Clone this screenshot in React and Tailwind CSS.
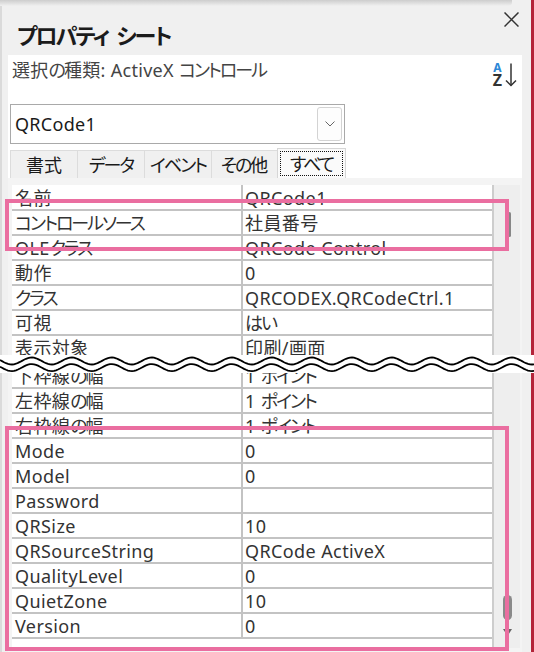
import React from 'react';

const topRows = [
  ['名前', 'QRCode1'],
  ['コントロールソース', '社員番号'],
  ['OLEクラス', 'QRCode Control'],
  ['動作', '0'],
  ['クラス', 'QRCODEX.QRCodeCtrl.1'],
  ['可視', 'はい'],
  ['表示対象', '印刷/画面'],
];

const bottomRows = [
  ['下枠線の幅', '1 ポイント'],
  ['左枠線の幅', '1 ポイント'],
  ['右枠線の幅', '1 ポイント'],
  ['Mode', '0'],
  ['Model', '0'],
  ['Password', ''],
  ['QRSize', '10'],
  ['QRSourceString', 'QRCode ActiveX'],
  ['QualityLevel', '0'],
  ['QuietZone', '10'],
  ['Version', '0'],
];

const tabs = [
  { label: '書式', w: 'w-[67px]' },
  { label: 'データ', w: 'w-[67px]' },
  { label: 'イベント', w: 'w-[67px]' },
  { label: 'その他', w: 'w-[66px]' },
];

// かなは詰めて、英字は少し広げる（Meiryo UI の幅に寄せる）
function J({ text, latin = '' }) {
  const parts = text.split(/([\u3040-\u30ff]+)/);
  return parts.map((p, i) => {
    if (!p) return null;
    if (/[\u3040-\u30ff]/.test(p)) {
      return (
        <span key={i} className="tracking-[-2px]">
          {p}
        </span>
      );
    }
    return (
      <span key={i} className={latin}>
        {p}
      </span>
    );
  });
}

// 波線（省略記号）のパスを作る
function wavePath(cy) {
  let d = '';
  for (let x = 0; x <= 534; x += 2) {
    const y = cy - 3.5 * Math.cos((2 * Math.PI * (x - 31.7)) / 40);
    d += (x === 0 ? 'M' : 'L') + x + ' ' + y.toFixed(2) + ' ';
  }
  return d;
}

function Row({ name, value, first, extra = '' }) {
  return (
    <div className={`flex border-b-2 border-[#c3c3c3] ${first ? 'h-[26px]' : 'h-[25px]'} ${extra}`}>
      <div className="w-[231px] shrink-0 border-r-2 border-[#c3c3c3] pl-[3px] flex items-center whitespace-nowrap overflow-hidden">
        <span className={first ? 'mt-[3px]' : 'mt-[1px]'}>
          <J text={name} latin="tracking-[0.4px]" />
        </span>
      </div>
      <div className="flex-1 pl-[2px] flex items-center whitespace-nowrap overflow-hidden">
        <span className={first ? 'mt-[3px]' : 'mt-[1px]'}>
          <J text={value} latin="tracking-[0.4px]" />
        </span>
      </div>
    </div>
  );
}

function SortIcon() {
  return (
    <div className="flex items-start gap-[2px]">
      <div className="flex flex-col items-center w-[11px]">
        <span className="text-[12px] leading-[10px] font-bold text-[#2b87d6]">A</span>
        <span className="text-[16px] leading-[14px] font-bold text-[#333]">Z</span>
      </div>
      <svg width="12" height="24" viewBox="0 0 12 24" fill="none" stroke="#333" strokeWidth="1.5">
        <path d="M6 0.5 V22.5" />
        <path d="M1 17.5 L6 22.5 L11 17.5" />
      </svg>
    </div>
  );
}

export default function App() {
  return (
    <div className="relative w-[534px] h-[652px] overflow-hidden bg-[#f0f0f0] flex font-['Noto_Sans','Noto_Sans_CJK_JP',sans-serif] [font-feature-settings:'palt']">
      {/* 上端の影 */}
      <div className="absolute top-0 left-0 w-[512px] h-[6px] rounded-br-[4px] bg-linear-to-b from-[#cdcdcd] to-[#f0f0f0]" />

      <div className="w-[531px] h-full border-l-2 border-[#dadada] flex flex-col">
        <div className="h-[55px] flex justify-between items-start">
          <div className="pl-[15px] pt-[19px] text-[22px] leading-[32px] font-bold text-[#1b1b1b] whitespace-nowrap">
            <J text="プロパティ" />
            <span className="inline-block w-[8px]" />
            <J text="シート" />
          </div>
          <svg className="mt-[12px] mr-[12px]" width="15" height="15" viewBox="0 0 15 15" stroke="#333" strokeWidth="1.5">
            <path d="M0.5 0.5 L14.5 14.5 M14.5 0.5 L0.5 14.5" />
          </svg>
        </div>

        <div className="ml-[6px] mr-[9px] bg-white">
          <div className="h-[49px] flex justify-between items-start">
            <div className="pl-[4px] pt-[3px] text-[18px] leading-[24px] text-[#444]">
              <J text="選択の種類: ActiveX コントロール" latin="tracking-[0.3px]" />
            </div>
            <div className="mt-[8px] mr-[5px]">
              <SortIcon />
            </div>
          </div>

          <div className="ml-[2px] w-[335px] h-[40px] border border-[#a9a9a9] flex items-center justify-between">
            <span className="pl-[4px] text-[18px] text-[#1a1a1a] tracking-[0.3px]">QRCode1</span>
            <div className="mr-[2px] w-[25px] h-[34px] border border-[#d3d3d3] rounded-[3px] bg-[#fdfdfd] flex items-center justify-center">
              <svg width="10" height="6" viewBox="0 0 10 6" fill="none" stroke="#666" strokeWidth="1">
                <path d="M0.5 0.5 L5 5 L9.5 0.5" />
              </svg>
            </div>
          </div>

          <div className="mt-[4px] ml-[2px] h-[30px] flex items-end text-[18px] text-[#1a1a1a]">
            {tabs.map((t) => (
              <div
                key={t.label}
                className={`${t.w} h-[28px] bg-[#f0f0f0] border-t border-l border-[#dcdcdc] flex items-center justify-center leading-[24px]`}
              >
                <J text={t.label} />
              </div>
            ))}
            <div className="w-[69px] h-[30px] bg-[#fafafa] border border-b-0 border-[#d6d6d6] p-[2px]">
              <div className="h-full border border-dotted border-[#111] flex items-center justify-center leading-[24px]">
                <J text="すべて" />
              </div>
            </div>
          </div>
        </div>

        <div className="ml-[6px] mr-[9px] flex-1 bg-[#f4f4f4] pt-[7px] pl-[4px] flex items-start">
          <div className="w-[482px] h-[463px] bg-white border-r-2 border-[#cdcdcd] flex flex-col text-[18px] leading-[23px] text-[#333]">
            <div className="h-[170px] overflow-hidden">
              {topRows.map(([n, v], i) => (
                <Row key={n} name={n} value={v} first={i === 0} />
              ))}
            </div>
            <div className="flex-1 overflow-hidden">
              {bottomRows.map(([n, v], i) => (
                <Row key={n} name={n} value={v} extra={i === 0 ? 'mt-[9px]' : ''} />
              ))}
            </div>
          </div>
          <div className="w-[26px] h-[463px] bg-[#eeeeee] flex flex-col">
            <div className="ml-[14px] mt-[27px] w-[3px] h-[25px] rounded-full bg-[#878787]" />
            <div className="ml-[9px] mt-[358px] w-[9px] h-[25px] rounded-full bg-[#8a8a8a]" />
            <svg className="ml-[9px] mt-[9px]" width="9" height="7" viewBox="0 0 9 7">
              <path d="M0 0 H9 L4.5 7 Z" fill="#666" />
            </svg>
          </div>
        </div>
      </div>

      <div className="w-[3px] h-full bg-[#b42339]" />

      {/* 注目枠 */}
      <div className="absolute left-[5px] top-[199px] w-[504px] h-[52px] border-[4px] border-[#ea6ea0]" />
      <div className="absolute left-[5px] top-[426px] w-[504px] h-[225px] border-[4px] border-[#ea6ea0]" />

      {/* 省略を表す波線 */}
      <svg className="absolute left-0 top-[355px] bg-white" width="534" height="18" viewBox="0 0 534 18" fill="none" stroke="#000" strokeWidth="1.8">
        <path d={wavePath(6)} />
        <path d={wavePath(12.6)} />
      </svg>
    </div>
  );
}
